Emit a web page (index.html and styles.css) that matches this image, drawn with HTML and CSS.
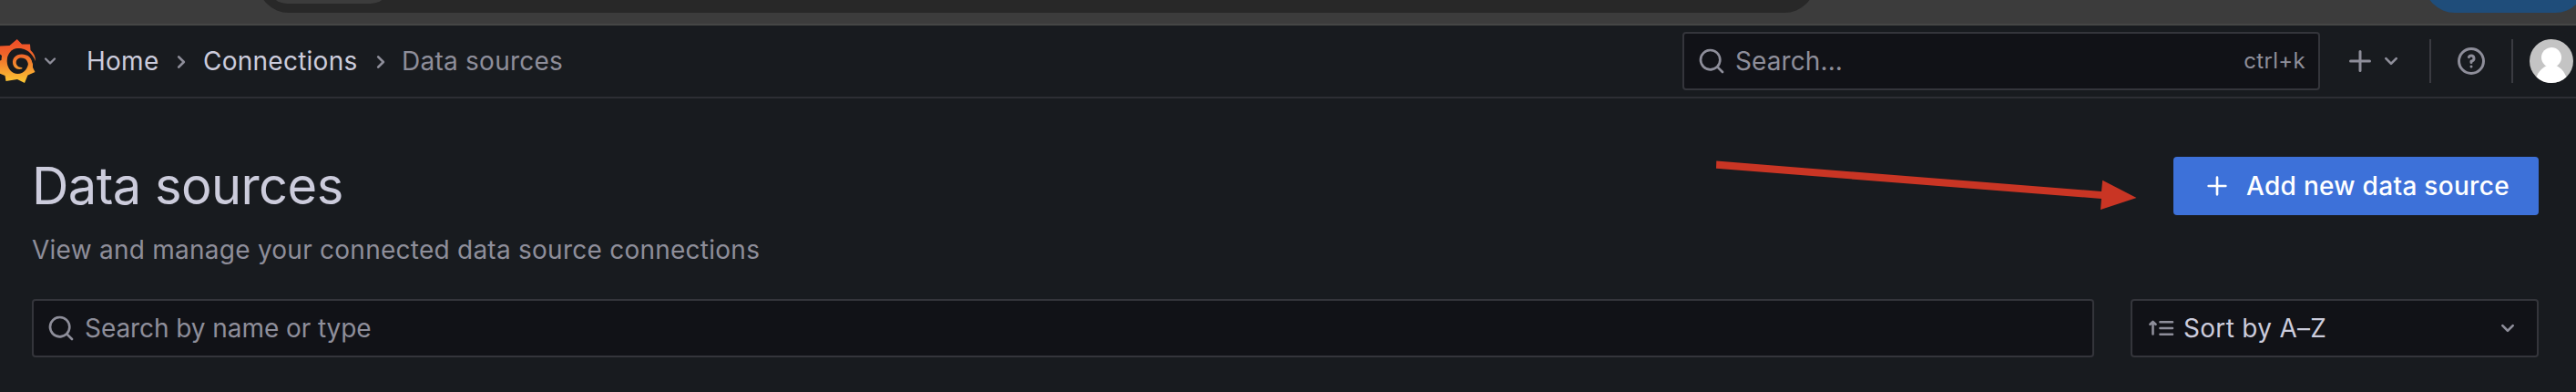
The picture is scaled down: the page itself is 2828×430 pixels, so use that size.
FILE: index.html
```html
<!DOCTYPE html>
<html lang="en">
<head>
<meta charset="utf-8">
<title>Data sources</title>
<link rel="stylesheet" href="styles.css">
</head>
<body>
<svg class="sprite" width="0" height="0">
  <symbol id="search" viewBox="0 0 24 24"><path d="M21.71,20.29,18,16.61A9,9,0,1,0,16.61,18l3.68,3.68a1,1,0,0,0,1.42,0A1,1,0,0,0,21.71,20.29ZM11,18a7,7,0,1,1,7-7A7,7,0,0,1,11,18Z"/></symbol>
  <symbol id="down" viewBox="0 0 24 24"><path d="M17,9.17a1,1,0,0,0-1.41,0L12,12.71,8.46,9.17a1,1,0,0,0-1.41,0,1,1,0,0,0,0,1.42l4.24,4.24a1,1,0,0,0,1.42,0L17,10.59A1,1,0,0,0,17,9.17Z"/></symbol>
  <symbol id="right" viewBox="0 0 24 24"><path d="M14.83,11.29,10.59,7.05a1,1,0,0,0-1.42,0,1,1,0,0,0,0,1.41L12.71,12,9.17,15.54a1,1,0,0,0,0,1.41,1,1,0,0,0,.71.29,1,1,0,0,0,.71-.29l4.24-4.24A1,1,0,0,0,14.83,11.29Z"/></symbol>
  <symbol id="plus" viewBox="0 0 24 24"><path d="M19,11H13V5a1,1,0,0,0-2,0v6H5a1,1,0,0,0,0,2h6v6a1,1,0,0,0,2,0V13h6a1,1,0,0,0,0-2Z"/></symbol>
  <symbol id="help" viewBox="0 0 24 24"><path d="M11.29,15.29a1.58,1.58,0,0,0-.12.15.76.76,0,0,0-.09.18.64.64,0,0,0-.06.18,1.36,1.36,0,0,0,0,.2.84.84,0,0,0,.08.38.9.9,0,0,0,.54.54.94.94,0,0,0,.76,0,.9.9,0,0,0,.54-.54A1,1,0,0,0,13,16a1,1,0,0,0-.29-.71A1,1,0,0,0,11.29,15.29ZM12,2A10,10,0,1,0,22,12,10,10,0,0,0,12,2Zm0,18a8,8,0,1,1,8-8A8,8,0,0,1,12,20ZM12,7A3,3,0,0,0,9.4,8.5a1,1,0,1,0,1.73,1A1,1,0,0,1,12,9a1,1,0,0,1,0,2,1,1,0,0,0-1,1v1a1,1,0,0,0,2,0v-.18A3,3,0,0,0,12,7Z"/></symbol>
</svg>
<div class="browser">
  <div class="omnibox"><div class="site-chip"></div></div>
  <div class="profile-chip"></div>
</div>
<header class="topbar">
  <svg class="logo" viewBox="0 0 40 48">
    <defs><linearGradient id="flame" gradientUnits="userSpaceOnUse" x1="0" y1="0" x2="0" y2="48"><stop offset="0" stop-color="#ee4b28"/><stop offset=".35" stop-color="#f0652a"/><stop offset="1" stop-color="#fcc934"/></linearGradient></defs>
    <path fill="url(#flame)" d="M-2 7.500 L10.500 7 L18.700 0 L24 5.500 L33 5.500 L33.500 12 C37 15 39 19 39 24 L36 27 L36 31 L38.500 36 L30.500 39.500 L27 48 L19 44 L6.500 46 L5.500 40 L-2 37 L-2 24 L1.500 23 L2 18 L-2 15Z"/>
    <ellipse cx="19.500" cy="24" rx="11.800" ry="14" fill="#181b1f"/>
    <path fill="#181b1f" d="M18 10C28 9 35 14 39.500 25L40 34L36.500 29C35 22 31 17 24 15Z"/>
    <path fill="url(#flame)" d="M31 34C38 28 36 17 24 16.500C17 16.500 13.500 21 14 26C14.500 31 18.500 34 24 32.500C25 32 24.500 31 23.500 31C20 31 17.500 28 17.700 25.500C18 20.500 23 19.300 27.500 21.500C31 24 32 29 30 34Z"/>
  </svg>
  <svg class="ic logo-arrow"><use href="#down"/></svg>
  <nav class="crumbs">
    <span class="crumb home">Home</span>
    <svg class="ic sep"><use href="#right"/></svg>
    <span class="crumb conn">Connections</span>
    <svg class="ic sep"><use href="#right"/></svg>
    <span class="crumb current">Data sources</span>
  </nav>
  <div class="field top-search">
    <svg class="ic"><use href="#search"/></svg>
    <span class="placeholder">Search...</span>
    <span class="kbd">ctrl+k</span>
  </div>
  <div class="add-menu">
    <svg class="ic big"><use href="#plus"/></svg>
    <svg class="ic"><use href="#down"/></svg>
  </div>
  <i class="rule"></i>
  <svg class="ic big help"><use href="#help"/></svg>
  <i class="rule"></i>
  <svg class="avatar" viewBox="0 0 48 48">
    <defs><clipPath id="round"><circle cx="24" cy="24" r="24"/></clipPath></defs>
    <g clip-path="url(#round)"><rect width="48" height="48" fill="#c4c4c4"/><circle cx="24" cy="20" r="11" fill="#fff"/><path fill="#fff" d="M7 43C10 34 15 31 19 29h10c5 2 9 6 12 14v5H7z"/></g>
  </svg>
</header>
<main class="page">
  <section class="heading">
    <div>
      <h1 class="title">Data sources</h1>
      <p class="subtitle">View and manage your connected data source connections</p>
    </div>
    <button class="primary"><svg class="ic"><use href="#plus"/></svg><span>Add new data source</span></button>
  </section>
  <section class="filters">
    <div class="field filter-search">
      <svg class="ic"><use href="#search"/></svg>
      <span class="placeholder">Search by name or type</span>
    </div>
    <div class="field sort">
      <svg class="sort-icon" viewBox="0 0 28 18"><path d="M4.500 15.500V3M1.500 4.800 4.500 1.900 7.500 4.800M12.500 2.300H26M12.500 9H26M12.500 15.700H26"/></svg>
      <span>Sort by A–Z</span>
      <svg class="ic sort-arrow"><use href="#down"/></svg>
    </div>
  </section>
  <svg class="arrow" viewBox="0 0 464 56"><path d="M1.300 .6 424 34 425.200 21.700 462.500 41 423 54 424 42 1 8.800Z"/></svg>
</main>
</body>
</html>
```
FILE: styles.css
```css
* { box-sizing: border-box; }
body { margin: 0; width: 2828px; height: 430px; overflow: hidden; background: #181b1f; color: #ccccdc; font: 400 28px/44px Inter, "Liberation Sans", sans-serif; letter-spacing: 0.3px; }
.sprite { display: block; }
.browser { display: flex; align-items: flex-end; height: 28px; padding: 0 0 12px 283px; background: #3c3c3c; border-bottom: 2px solid #454645; overflow: hidden; }
.omnibox { display: flex; align-items: flex-end; flex: none; width: 1710px; height: 68px; padding: 0 0 10px 9px; border-radius: 34px; background: #282828; }
.site-chip { width: 138px; height: 48px; border-radius: 24px; background: #3c3c3c; }
.profile-chip { flex: none; width: 178px; height: 68px; margin-left: 668px; border-radius: 34px; background: #1f4d7a; }
.topbar { display: flex; align-items: center; height: 80px; border-bottom: 2px solid #2d2e34; }
.ic { display: block; flex: none; width: 32px; height: 32px; fill: #8e8e9a; }
.big { width: 36px; height: 36px; }
.logo { flex: none; width: 40px; height: 48px; }
.logo-arrow { width: 28px; height: 28px; margin-left: 1px; }
.crumbs { display: flex; align-items: center; margin: 0 0 0 26px; white-space: nowrap; }
.crumb { flex: none; letter-spacing: 0.25px; }
.home { width: 88px; }
.conn { width: 179px; }
.sep { margin: 2px 8px 0 0; }
.sep + .current { margin-left: -1px; }
.current { color: #8e8e9a; }
.field { display: flex; align-items: center; height: 64px; border: 2px solid #34353b; border-radius: 4px; background: #111217; white-space: nowrap; }
.placeholder { color: #8e8e9a; letter-spacing: -0.07px; }
.top-search { width: 700px; margin-left: auto; padding: 0 14px 0 14px; }
.top-search .placeholder { margin-left: 10px; letter-spacing: 0.1px; }
.kbd { margin-left: auto; color: #8e8e9a; font-size: 24px; }
.add-menu { display: flex; align-items: center; margin-left: 26px; }
.rule { flex: none; width: 2px; height: 48px; background: #3a3b41; }
.add-menu + .rule { margin-left: 26px; }
.help { margin: 0 26px; }
.avatar { flex: none; width: 48px; height: 48px; margin: 0 3px 0 18px; }
.page { position: relative; padding: 64px 41px 0 35px; }
.heading { display: flex; justify-content: space-between; height: 156px; }
.title { margin: 0; font-size: 56px; line-height: 64px; font-weight: 400; letter-spacing: -0.55px; }
.subtitle { margin: 16px 0 0; color: #8e8e9a; letter-spacing: 0.25px; }
.primary { display: flex; align-items: center; width: 401px; height: 64px; padding: 0 0 0 32px; border: 0; border-radius: 4px; background: #3d71d9; color: #fff; font: inherit; font-weight: 500; letter-spacing: 0.3px; white-space: nowrap; }
.primary .ic { margin-right: 16px; fill: #fff; }
.filters { display: flex; gap: 40px; }
.filter-search { flex: 1; padding-left: 14px; }
.filter-search .placeholder { margin-left: 10px; }
.sort { width: 448px; padding: 0 16px 0 18px; }
.sort-icon { width: 28px; height: 18px; margin-right: 10px; fill: none; stroke: #8e8e9a; stroke-width: 2.600; stroke-linecap: round; stroke-linejoin: round; }
.sort-arrow { margin-left: auto; }
.arrow { position: absolute; left: 1883px; top: 68px; width: 464px; height: 56px; fill: #c93524; }
```
